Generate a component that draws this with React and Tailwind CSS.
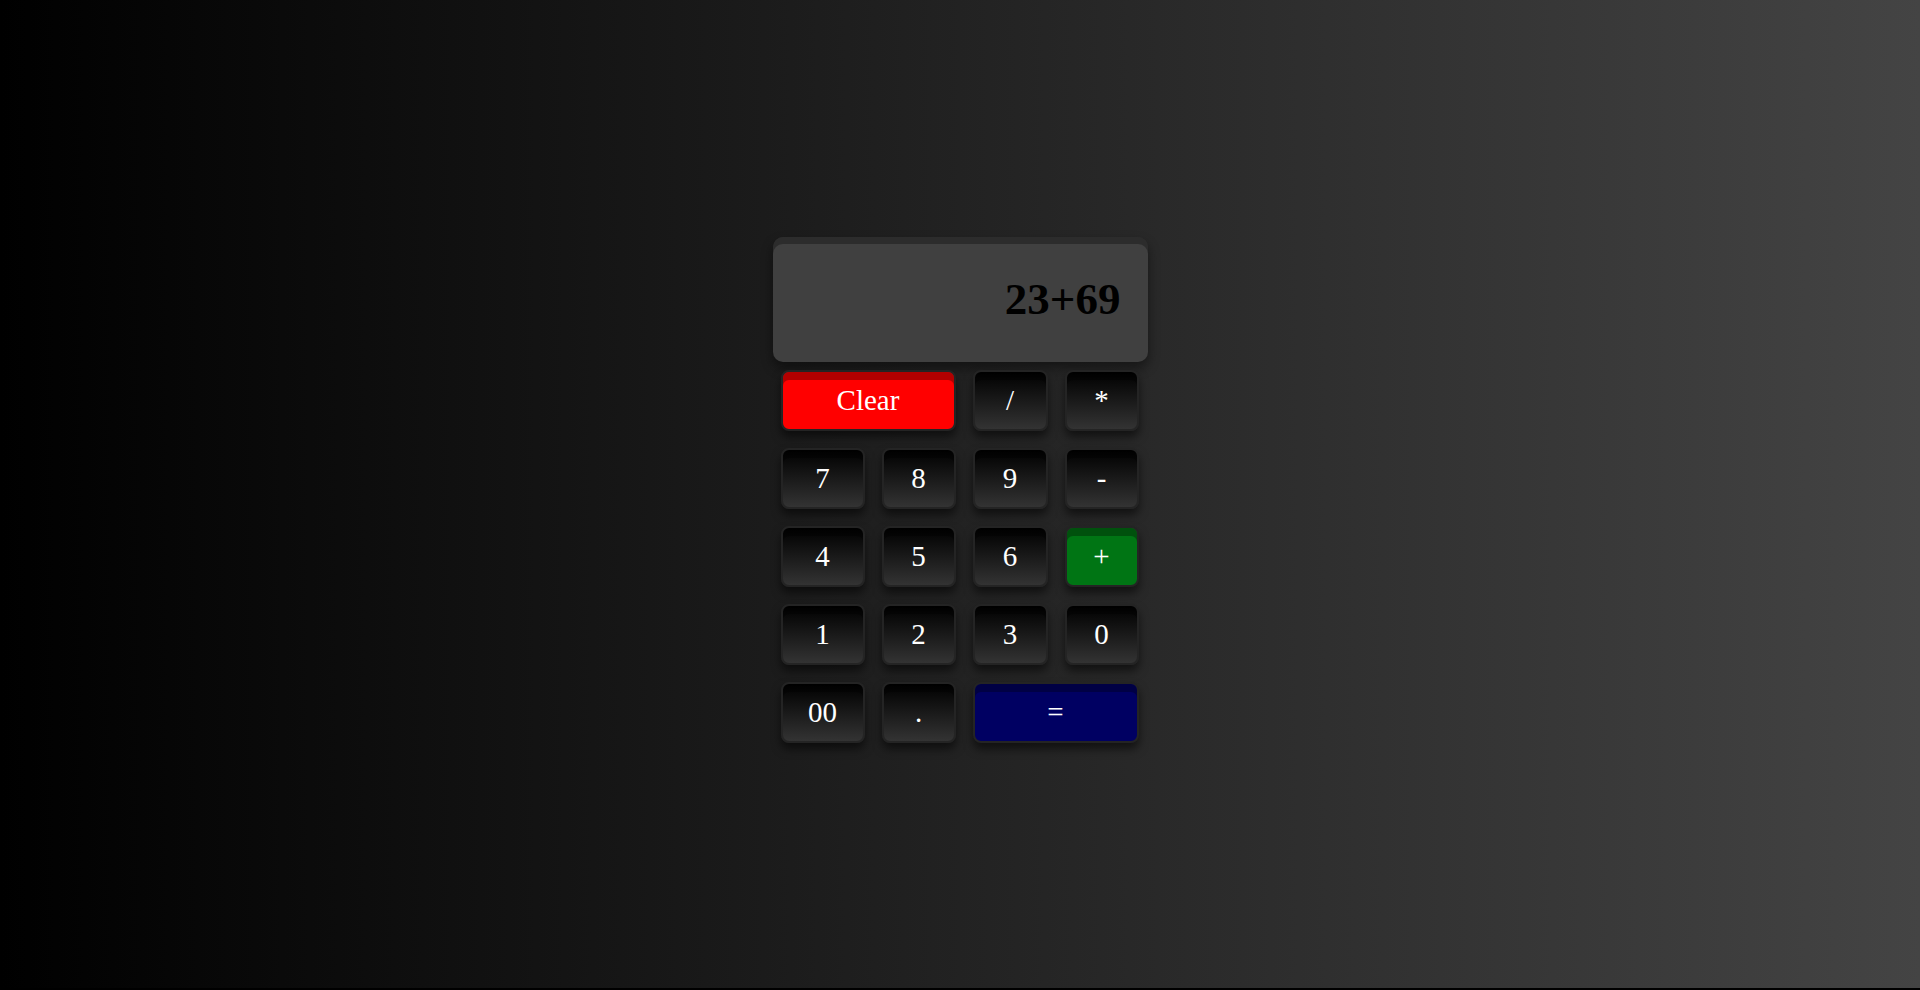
import React from 'react';

const keys = [
  { label: 'Clear', span: true, tone: 'red' },
  { label: '/' },
  { label: '*' },
  { label: '7' },
  { label: '8' },
  { label: '9' },
  { label: '-' },
  { label: '4' },
  { label: '5' },
  { label: '6' },
  { label: '+', tone: 'green' },
  { label: '1' },
  { label: '2' },
  { label: '3' },
  { label: '0' },
  { label: '00' },
  { label: '.' },
  { label: '=', span: true, tone: 'blue' },
];

const tones = {
  red: 'bg-[#ff0000]',
  green: 'bg-[#007514]',
  blue: 'bg-[#000062]',
  dark: 'bg-[linear-gradient(to_bottom,#000000,#333333)]',
};

const Key = ({ label, span, tone = 'dark' }) => {
  return (
    <button
      className={`${span ? 'col-span-2' : ''} ${tones[tone]} flex items-center justify-center rounded-lg border-2 border-[#242424] text-[29px] text-white shadow-[inset_0_8px_0_rgba(0,0,0,0.3),0_6px_10px_rgba(0,0,0,0.55)]`}
    >
      {label}
    </button>
  );
};

const App = () => {
  return (
    <div className="h-screen bg-black">
      <div className="flex h-[988px] items-center justify-center bg-[linear-gradient(to_right,#000000,#444444)] pb-[8px] font-['Liberation_Serif',serif]">
        <div className="flex w-[375px] flex-col gap-[8px]">
          <div className="flex h-[125px] items-center justify-end rounded-[10px] bg-[#404040] pr-[27px] shadow-[inset_0_7px_0_rgba(0,0,0,0.3),0_6px_12px_rgba(0,0,0,0.45)]">
            <span className="text-[45px] font-bold text-black">23+69</span>
          </div>
          <div className="grid grid-cols-[84px_74px_75px_74px] auto-rows-[61px] gap-[17px] pl-[8px]">
            {keys.map(key => (
              <Key key={key.label} {...key} />
            ))}
          </div>
        </div>
      </div>
    </div>
  );
};

export default App;
